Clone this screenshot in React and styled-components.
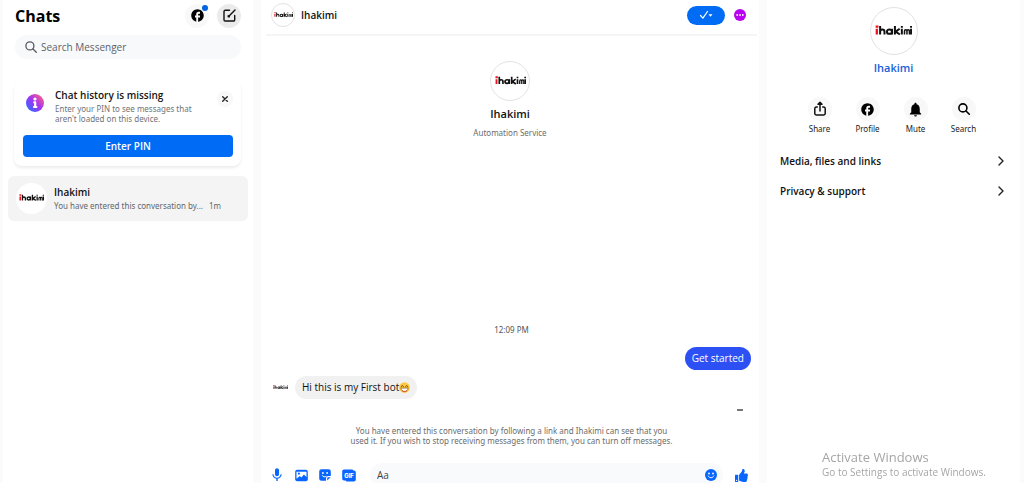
import React from "react";
import styled, { createGlobalStyle } from "styled-components";
import { MdFacebook, MdMic, MdNotifications } from "react-icons/md";
import { FaThumbsUp } from "react-icons/fa";

const smallFont = `"Noto Sans", "Open Sans", sans-serif`;

const GlobalStyle = createGlobalStyle`
  *, *::before, *::after { box-sizing: border-box; }
  body {
    margin: 0;
    background: #fbfbfb;
    color: #111;
    font-family: "Open Sans", "Noto Sans", sans-serif;
    font-size: 10px;
    line-height: 14px;
  }
  button, input { font: inherit; color: inherit; border: 0; padding: 0; background: none; }
  button { cursor: pointer; }
  input:focus { outline: none; }
  h1, h2, h3, p { margin: 0; }
  svg { display: block; flex: none; }
`;

const Page = styled.div`
  display: grid;
  grid-template-columns: 250fr 498fr 253fr;
  gap: 8px;
  height: 100vh;
  padding: 0 4px 0 3px;
  overflow: hidden;
`;

const Panel = styled.div`
  display: flex;
  flex-direction: column;
  min-width: 0;
  min-height: 0;
  background: #fff;
`;

const Avatar = styled.span`
  display: flex;
  align-items: center;
  justify-content: center;
  flex: none;
  width: ${(p) => p.$size}px;
  height: ${(p) => p.$size}px;
  border: ${(p) => (p.$plain ? "0" : "1px solid #e2e2e2")};
  border-radius: 50%;
  background: ${(p) => (p.$bare ? "none" : "#fff")};
`;

function LogoAvatar({ size, logo, plain, bare }) {
  return (
    <Avatar $size={size} $plain={plain} $bare={bare}>
      <svg width={logo} height={logo / 3} viewBox="0 0 39 13" role="img" aria-label="Ihakimi">
        <g fill="none" stroke="#111" strokeWidth="2.100" strokeLinecap="butt" strokeLinejoin="round">
          <g stroke="#f01420" strokeWidth="2.400">
            <path d="M1.900 4V10M.6 1.600h3" />
          </g>
          <path d="M5.400 1v9M5.400 7c0-3 4.600-3 4.600 0v3" />
          <path d="M18 4V10" />
          <ellipse cx="15.200" cy="7" rx="2.600" ry="2.300" />
          <path d="M21 1v9M26 4L21.800 7l4.400 3" />
          <path d="M28.300 4V10M28.300 1v1.800" />
          <path d="M31.100 10V6.500c0-2 2.600-2 2.600 0V10M33.700 6.500c0-2 2.600-2 2.600 0V10" strokeWidth="1.600" />
          <path d="M38 4V10M38 1v1.800" />
        </g>
      </svg>
    </Avatar>
  );
}

/* Chat list */

const ListHeader = styled.header`
  display: flex;
  align-items: center;
  gap: 8px;
  height: 31px;
  margin: 0 12px 4px;
`;

const PageTitle = styled.h1`
  flex: 1;
  font-size: 16px;
  line-height: 20px;
  font-weight: 700;
  color: #000;
`;

const RoundButton = styled.button`
  position: relative;
  display: flex;
  align-items: center;
  justify-content: center;
  flex: none;
  width: ${(p) => p.$size || 24}px;
  height: ${(p) => p.$size || 24}px;
  border-radius: 50%;
  background: ${(p) => p.$bg || "#f8f8f8"};
  color: #000;
`;

const Badge = styled.span`
  position: absolute;
  top: 1px;
  right: 1px;
  width: 6px;
  height: 6px;
  border-radius: 50%;
  background: #0064e0;
`;

const SearchBox = styled.label`
  display: flex;
  align-items: center;
  gap: 4px;
  height: 24px;
  margin: 0 12px;
  padding: 0 10px;
  border-radius: 12px;
  background: #f8f9fb;
  color: #555a60;
`;

const TextInput = styled.input`
  flex: 1;
  min-width: 0;
  height: 20px;
  &::placeholder { color: ${(p) => p.$hint || "#5d6268"}; opacity: 1; }
`;

const NoticeCard = styled.section`
  margin: 21px 12px 0 11px;
  padding: 8px 8px 9px 9px;
  border-radius: 8px;
  box-shadow: 0 2px 3px rgba(0, 0, 0, 0.08);
`;

const NoticeTop = styled.div`
  display: grid;
  grid-template-columns: 24px 1fr 16px;
  column-gap: 8px;
  margin-bottom: 11px;
`;

const NoticeIcon = styled.span`
  display: flex;
  justify-content: center;
  padding-top: 6px;
`;

const NoticeTitle = styled.h2`
  font-size: 10px;
  line-height: 14px;
  font-weight: 600;
  color: #151515;
`;

const NoticeText = styled.p`
  padding-top: 2px;
  font-family: ${smallFont};
  font-size: 8px;
  line-height: 10px;
  color: #6f7378;
  white-space: nowrap;
`;

const CloseWrap = styled.div`
  padding-top: 3px;
`;

const PrimaryButton = styled.button`
  display: block;
  width: 100%;
  height: 22px;
  border-radius: 4px;
  background: #006cf5;
  color: #fff;
  font-weight: 600;
`;

const ChatRow = styled.a`
  display: flex;
  align-items: center;
  gap: 7px;
  height: 45px;
  margin: 10px 5px 0;
  padding: 0 8px;
  border-radius: 6px;
  background: #f4f4f4;
  color: #111;
  text-decoration: none;
`;

const ChatName = styled.div`
  font-weight: 600;
`;

const ChatPreview = styled.div`
  display: flex;
  gap: 6px;
  font-family: ${smallFont};
  font-size: 8px;
  color: #62666b;
  white-space: nowrap;
`;

/* Conversation */

const ThreadHeader = styled.header`
  display: flex;
  align-items: center;
  gap: 6px;
  height: 36px;
  flex: none;
  margin: 0 2px 0 5px;
  padding: 0 10px 4px 5px;
  border-bottom: 2px solid #f5f5f5;
`;

const ThreadName = styled.h2`
  flex: 1;
  font-size: 10px;
  line-height: 14px;
  font-weight: 600;
`;

const DonePill = styled.button`
  display: flex;
  align-items: center;
  justify-content: center;
  width: 38px;
  height: 19px;
  margin-right: 2px;
  border-radius: 10px;
  background: #006cf5;
`;

const Intro = styled.section`
  display: flex;
  flex-direction: column;
  align-items: center;
  padding-top: 25px;
`;

const IntroName = styled.h3`
  margin-top: 5px;
  font-size: 11px;
  line-height: 16px;
  font-weight: 600;
`;

const IntroRole = styled.p`
  margin-top: 4px;
  font-family: ${smallFont};
  font-size: 8px;
  line-height: 14px;
  color: #6c6c6c;
`;

const Messages = styled.div`
  display: flex;
  flex-direction: column;
  margin-top: auto;
  padding: 0 8px 0 11px;
`;

const TimeStamp = styled.time`
  align-self: center;
  font-family: ${smallFont};
  font-size: 8px;
  line-height: 12px;
  color: #555;
`;

const SentBubble = styled.div`
  align-self: flex-end;
  margin-top: 11px;
  padding: 4px 7px 5px;
  border-radius: 12px;
  background: #2d50f5;
  color: #fff;
`;

const ReceivedRow = styled.div`
  display: flex;
  align-items: center;
  gap: 7px;
  margin-top: 6px;
`;

const ReceivedBubble = styled.div`
  display: flex;
  align-items: center;
  padding: 4px 7px 5px;
  border-radius: 12px;
  background: #f1f1f1;
`;

const Status = styled.div`
  align-self: flex-end;
  width: 6px;
  height: 2px;
  margin: 10px 8px 0 0;
  background: #777;
`;

const EntryNote = styled.p`
  margin: 15px 0 0;
  align-self: center;
  font-family: ${smallFont};
  font-size: 8px;
  line-height: 10px;
  text-align: center;
  color: #6c6c6c;
`;

const Composer = styled.form`
  display: flex;
  align-items: center;
  gap: 10px;
  flex: none;
  height: 24px;
  margin: 17px 11px -4px 9px;
  color: #0866ff;
`;

const ToolButton = styled.button`
  display: flex;
  align-items: center;
  justify-content: center;
  flex: none;
  width: 14px;
  height: 14px;
  color: #0866ff;
`;

const MessageField = styled.div`
  display: flex;
  align-items: center;
  flex: 1;
  height: 24px;
  margin: 0 1px 0 4px;
  padding: 0 5px 0 7px;
  border-radius: 12px;
  background: #f9fafb;
  color: #333;
`;

/* Details */

const Profile = styled.section`
  display: flex;
  flex-direction: column;
  align-items: center;
  padding-top: 7px;
`;

const ProfileLink = styled.a`
  margin-top: 5px;
  font-size: 11px;
  line-height: 16px;
  font-weight: 600;
  color: #1660d8;
  text-decoration: none;
`;

const Actions = styled.div`
  display: grid;
  grid-template-columns: repeat(4, 48px);
  justify-content: center;
  margin: 21px 4px 0 0;
`;

const Action = styled.div`
  display: flex;
  flex-direction: column;
  align-items: center;
  gap: 2px;
  font-family: ${smallFont};
  font-size: 8px;
  line-height: 12px;
  color: #222;
`;

const DetailRow = styled.button`
  display: flex;
  align-items: center;
  justify-content: space-between;
  height: 30px;
  padding: 0 16px 0 13px;
  font-weight: 600;
  text-align: left;
`;

const DetailList = styled.div`
  display: flex;
  flex-direction: column;
  margin-top: 11px;
`;

const Watermark = styled.div`
  position: fixed;
  right: 42px;
  bottom: 4px;
  width: 160px;
  color: #a6a6a6;
  font-size: 10px;
  line-height: 14px;
  white-space: nowrap;
  pointer-events: none;
`;

const WatermarkTitle = styled.div`
  font-size: 13px;
  line-height: 16px;
`;

const SearchIcon = ({ size, weight = 1.3 }) => (
  <svg width={size} height={size} viewBox="0 0 12 12" fill="none" stroke="currentColor" strokeWidth={weight} strokeLinecap="round">
    <circle cx="4.9" cy="4.9" r="4" />
    <path d="M8 8l3.300 3.300" />
  </svg>
);

const ComposeIcon = () => (
  <svg width="13" height="13" viewBox="0 0 13 13" fill="none" stroke="#111" strokeWidth="1.400" strokeLinecap="round" strokeLinejoin="round">
    <path d="M6.500 1.300H2.200A1.200 1.200 0 0 0 1 2.500v8.300A1.200 1.200 0 0 0 2.200 12h8.300a1.200 1.200 0 0 0 1.200-1.200V6.500" />
    <path d="M12 1L5.800 7.200M5.200 6.600v1.200h1.200" />
  </svg>
);

const InfoIcon = () => (
  <svg width="18" height="18" viewBox="0 0 18 18">
    <defs>
      <linearGradient id="info-fill" x1="0.1" y1="0.9" x2="0.9" y2="0.1">
        <stop offset="0" stopColor="#2b6cff" />
        <stop offset="0.5" stopColor="#a033f5" />
        <stop offset="1" stopColor="#ff5c87" />
      </linearGradient>
    </defs>
    <circle cx="9" cy="9" r="9" fill="url(#info-fill)" />
    <circle cx="9" cy="5" r="1.600" fill="#fff" />
    <path d="M8.200 8.300H9.200v4.500M8 13h2.400" fill="none" stroke="#fff" strokeWidth="2.200" strokeLinecap="round" strokeLinejoin="round" />
  </svg>
);

const CloseIcon = () => (
  <svg width="6" height="6" viewBox="0 0 6 6" stroke="#222" strokeWidth="1.300" strokeLinecap="round">
    <path d="M.7.7l4.600 4.600M5.300.7L.7 5.300" />
  </svg>
);

const DoneIcon = () => (
  <svg width="14" height="10" viewBox="0 0 14 10">
    <path d="M1.500 5.500l2.400 2.700L8.500 1.500" fill="none" stroke="#fff" strokeWidth="1.200" strokeLinecap="round" strokeLinejoin="round" />
    <path d="M9.500 4.200h4L11.500 6.800z" fill="#fff" />
  </svg>
);

const MoreIcon = () => (
  <svg width="12" height="12" viewBox="0 0 12 12">
    <circle cx="6" cy="6" r="6" fill="#b900f0" />
    <g fill="#fff">
      <circle cx="3.200" cy="6" r=".9" />
      <circle cx="6" cy="6" r=".9" />
      <circle cx="8.800" cy="6" r=".9" />
    </g>
  </svg>
);

const GrinEmoji = () => (
  <svg width="11" height="11" viewBox="0 0 20 20" role="img" aria-label="Beaming face">
    <circle cx="10" cy="10" r="9.600" fill="#ffc93d" />
    <path d="M3.500 8.500Q6 4 8.300 8.300M11.700 8.300Q14 4 16.500 8.500" fill="none" stroke="#5b3b12" strokeWidth="1.700" strokeLinecap="round" />
    <path d="M3.500 11h13c0 8-13 8-13 0z" fill="#fff" stroke="#8a4b1d" strokeWidth="1.300" />
    <path d="M5 15.500q5 2.200 10 0-1.500 3-5 3t-5-3z" fill="#e8553a" />
  </svg>
);

const PhotoIcon = () => (
  <svg width="13" height="13" viewBox="0 0 13 13">
    <rect x=".2" y=".8" width="12.600" height="11.400" rx="2" fill="currentColor" />
    <path d="M1.500 2.700h10v5.200L8.900 5.500 6.400 8.400 4.800 7l-3.300 2.800z" fill="#fff" />
    <circle cx="3.900" cy="4.600" r="1.100" fill="currentColor" />
  </svg>
);

const StickerIcon = () => (
  <svg width="12" height="12" viewBox="0 0 12 12">
    <path d="M2.400.3h7.200a2.200 2.200 0 0 1 2.200 2.200V7H9.200A2.200 2.200 0 0 0 7 9.200v2.500H2.400A2.200 2.200 0 0 1 .2 9.500v-7A2.200 2.200 0 0 1 2.400.3z" fill="currentColor" />
    <path d="M8.200 11.500V9.400c0-.7.500-1.200 1.200-1.200h2.200z" fill="currentColor" />
    <circle cx="3.900" cy="4" r=".9" fill="#fff" />
    <circle cx="8.100" cy="4" r=".9" fill="#fff" />
    <path d="M3.300 6.600c.8 1.500 2.600 1.600 3.700.9" fill="none" stroke="#fff" strokeWidth="1" strokeLinecap="round" />
  </svg>
);

const GifIcon = () => (
  <svg width="14" height="13" viewBox="0 0 14 13">
    <path d="M2 .4h8.500l.8 1H12a1.800 1.800 0 0 1 1.800 1.800v7.600a1.800 1.800 0 0 1-1.800 1.800H4.500l-1-1H2A1.800 1.800 0 0 1 .2 9.800V2.200A1.800 1.800 0 0 1 2 .4z" fill="currentColor" />
    <text x="7" y="8.700" textAnchor="middle" fill="#fff" fontFamily="Inter, sans-serif" fontWeight="800" fontSize="6">GIF</text>
  </svg>
);

const SmileIcon = () => (
  <svg width="12" height="12" viewBox="0 0 12 12">
    <circle cx="6" cy="6" r="6" fill="#0866ff" />
    <circle cx="4" cy="4.500" r=".9" fill="#fff" />
    <circle cx="8" cy="4.500" r=".9" fill="#fff" />
    <path d="M3.200 7c1.200 2.400 4.400 2.400 5.600 0" fill="none" stroke="#fff" strokeWidth="1" strokeLinecap="round" />
  </svg>
);

const ShareIcon = () => (
  <svg width="14" height="16" viewBox="0 0 14 16" fill="none" stroke="#111" strokeWidth="1.500" strokeLinecap="round" strokeLinejoin="round">
    <path d="M4.300 6H3.200a1.400 1.400 0 0 0-1.400 1.400v5.200A1.400 1.400 0 0 0 3.200 14h7.600a1.400 1.400 0 0 0 1.400-1.400V7.400A1.400 1.400 0 0 0 10.800 6H9.700" />
    <path d="M7 10V2" />
    <path d="M5 3.200L7 1.200l2 2z" fill="#111" />
  </svg>
);

const ChevronIcon = () => (
  <svg width="6" height="10" viewBox="0 0 6 10" fill="none" stroke="#222" strokeWidth="1.400" strokeLinecap="round" strokeLinejoin="round">
    <path d="M1 1l4 4-4 4" />
  </svg>
);

const actions = [
  { label: "Share", icon: <ShareIcon /> },
  { label: "Profile", icon: <MdFacebook size={15} /> },
  { label: "Mute", icon: <MdNotifications size={17} /> },
  { label: "Search", icon: <SearchIcon size={12} weight={1.6} /> },
];

const details = ["Media, files and links", "Privacy & support"];

export default function App() {
  return (
    <>
      <GlobalStyle />
      <Page>
        <Panel as="nav">
          <ListHeader>
            <PageTitle>Chats</PageTitle>
            <RoundButton aria-label="Facebook">
              <MdFacebook size={15} />
              <Badge />
            </RoundButton>
            <RoundButton aria-label="New message" $bg="#ebebeb">
              <ComposeIcon />
            </RoundButton>
          </ListHeader>
          <SearchBox>
            <SearchIcon size={12} />
            <TextInput type="text" placeholder="Search Messenger" aria-label="Search Messenger" />
          </SearchBox>
          <NoticeCard>
            <NoticeTop>
              <NoticeIcon><InfoIcon /></NoticeIcon>
              <div>
                <NoticeTitle>Chat history is missing</NoticeTitle>
                <NoticeText>
                  Enter your PIN to see messages that
                  <br />
                  aren't loaded on this device.
                </NoticeText>
              </div>
              <CloseWrap>
                <RoundButton $size={16} aria-label="Close"><CloseIcon /></RoundButton>
              </CloseWrap>
            </NoticeTop>
            <PrimaryButton>Enter PIN</PrimaryButton>
          </NoticeCard>
          <ChatRow href="#ihakimi">
            <LogoAvatar size={31} logo={25} plain />
            <div>
              <ChatName>Ihakimi</ChatName>
              <ChatPreview>
                <span>You have entered this conversation by...</span>
                <span>1m</span>
              </ChatPreview>
            </div>
          </ChatRow>
        </Panel>

        <Panel as="main">
          <ThreadHeader>
            <LogoAvatar size={24} logo={19} />
            <ThreadName>Ihakimi</ThreadName>
            <DonePill aria-label="Mark as done"><DoneIcon /></DonePill>
            <ToolButton aria-label="Conversation information"><MoreIcon /></ToolButton>
          </ThreadHeader>
          <Intro>
            <LogoAvatar size={40} logo={31} />
            <IntroName>Ihakimi</IntroName>
            <IntroRole>Automation Service</IntroRole>
          </Intro>
          <Messages>
            <TimeStamp>12:09 PM</TimeStamp>
            <SentBubble>Get started</SentBubble>
            <ReceivedRow>
              <LogoAvatar size={16} logo={15} plain bare />
              <ReceivedBubble>
                <span>Hi this is my First bot</span>
                <GrinEmoji />
              </ReceivedBubble>
            </ReceivedRow>
            <Status />
            <EntryNote>
              You have entered this conversation by following a link and Ihakimi can see that you
              <br />
              used it. If you wish to stop receiving messages from them, you can turn off messages.
            </EntryNote>
          </Messages>
          <Composer>
            <ToolButton type="button" aria-label="Voice clip"><MdMic size={16} /></ToolButton>
            <ToolButton type="button" aria-label="Attach photo"><PhotoIcon /></ToolButton>
            <ToolButton type="button" aria-label="Sticker"><StickerIcon /></ToolButton>
            <ToolButton type="button" aria-label="Choose a GIF"><GifIcon /></ToolButton>
            <MessageField>
              <TextInput type="text" placeholder="Aa" aria-label="Message" $hint="#444" />
              <ToolButton type="button" aria-label="Emoji"><SmileIcon /></ToolButton>
            </MessageField>
            <ToolButton type="button" aria-label="Send a like"><FaThumbsUp size={13} /></ToolButton>
          </Composer>
        </Panel>

        <Panel as="aside">
          <Profile>
            <LogoAvatar size={48} logo={37} />
            <ProfileLink href="#profile">Ihakimi</ProfileLink>
          </Profile>
          <Actions>
            {actions.map((a) => (
              <Action key={a.label}>
                <RoundButton aria-label={a.label}>{a.icon}</RoundButton>
                <span>{a.label}</span>
              </Action>
            ))}
          </Actions>
          <DetailList>
            {details.map((d) => (
              <DetailRow key={d}>
                <span>{d}</span>
                <ChevronIcon />
              </DetailRow>
            ))}
          </DetailList>
        </Panel>
      </Page>
      <Watermark>
        <WatermarkTitle>Activate Windows</WatermarkTitle>
        <div>Go to Settings to activate Windows.</div>
      </Watermark>
    </>
  );
}
